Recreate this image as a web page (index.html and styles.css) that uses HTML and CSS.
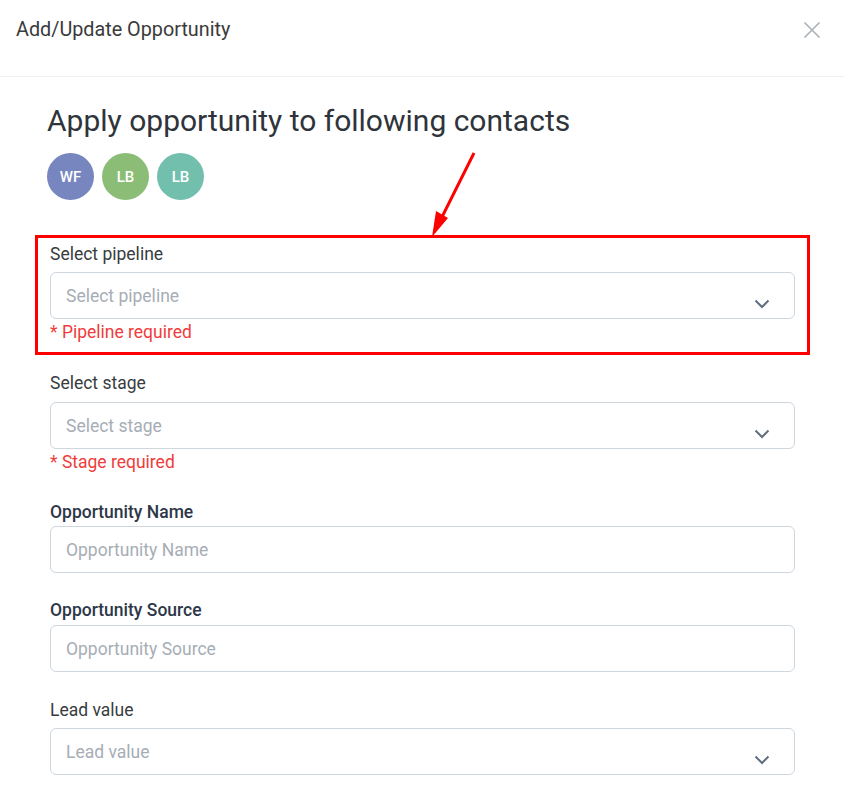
FILE: index.html
```html
<!DOCTYPE html>
<html>
  <head>
    <meta charset="UTF-8" />
    <meta name="viewport" content="width=device-width, initial-scale=1.0" />
    <title>Add/Update Opportunity</title>
    <link rel="stylesheet" href="styles.css">
  </head>
  <body>
    <div class="modal">
      <div class="modal-header">
        <h2 class="modal-title">Add/Update Opportunity</h2>
        <button class="close" aria-label="Close">
          <svg width="18" height="18" viewBox="0 0 18 18"><path d="M1.5 1.5L16.5 16.5M16.5 1.5L1.5 16.5" stroke="#a9b1b9" stroke-width="1.6" fill="none"/></svg>
        </button>
      </div>
      <div class="modal-body">
        <h1 class="heading">Apply opportunity to following contacts</h1>
        <div class="avatars">
          <span class="avatar wf">WF</span>
          <span class="avatar lb1">LB</span>
          <span class="avatar lb2">LB</span>
        </div>
        <svg class="arrow" width="60" height="100" viewBox="0 0 60 100">
          <path d="M52 2L18 70" stroke="#ff0000" stroke-width="3" fill="none"/>
          <path d="M10 86L14 60L26 67Z" fill="#ff0000"/>
        </svg>

        <div class="field highlight">
          <label class="label">Select pipeline</label>
          <div class="input select">
            <span class="placeholder">Select pipeline</span>
            <svg class="chevron" width="16" height="10" viewBox="0 0 16 10"><path d="M1.5 1.5L8 8L14.5 1.5" stroke="#5f6f7e" stroke-width="2" fill="none"/></svg>
          </div>
          <div class="error">* Pipeline required</div>
        </div>

        <div class="field stage">
          <label class="label">Select stage</label>
          <div class="input select">
            <span class="placeholder">Select stage</span>
            <svg class="chevron" width="16" height="10" viewBox="0 0 16 10"><path d="M1.5 1.5L8 8L14.5 1.5" stroke="#5f6f7e" stroke-width="2" fill="none"/></svg>
          </div>
          <div class="error">* Stage required</div>
        </div>

        <div class="field name">
          <label class="label strong">Opportunity Name</label>
          <div class="input"><span class="placeholder">Opportunity Name</span></div>
        </div>

        <div class="field source">
          <label class="label strong">Opportunity Source</label>
          <div class="input"><span class="placeholder">Opportunity Source</span></div>
        </div>

        <div class="field lead">
          <label class="label">Lead value</label>
          <div class="input select">
            <span class="placeholder">Lead value</span>
            <svg class="chevron" width="16" height="10" viewBox="0 0 16 10"><path d="M1.5 1.5L8 8L14.5 1.5" stroke="#5f6f7e" stroke-width="2" fill="none"/></svg>
          </div>
        </div>
      </div>
    </div>
  </body>
</html>
```

FILE: styles.css
```css
body {
  margin: 0;
  font-family: Roboto, "Liberation Sans", sans-serif;
  background: #fff;
  color: #333;
}
.modal-header {
  display: flex;
  align-items: flex-start;
  justify-content: space-between;
  height: 58px;
  padding: 18px 23px 0 16px;
  border-bottom: 1px solid #edf2f7;
}
.modal-title {
  margin: 0;
  font-size: 19.8px;
  line-height: 24px;
  font-weight: 400;
  color: #3a3a3a;
}
.close {
  border: 0;
  background: none;
  padding: 0;
  margin-top: 3px;
  width: 18px;
  height: 18px;
  cursor: pointer;
}
.modal-body {
  position: relative;
  padding: 26px 49px 0 50px;
}
.heading {
  margin: 0 0 0 -3px;
  font-size: 30px;
  line-height: 36px;
  font-weight: 400;
  color: #2f343a;
}
.avatars {
  display: flex;
  gap: 8px;
  margin: 14px 0 0 -3px;
}
.avatar {
  display: flex;
  align-items: center;
  justify-content: center;
  width: 47px;
  height: 47px;
  border-radius: 50%;
  color: #fff;
  font-size: 15px;
  font-weight: 500;
}
.wf { background: #7886bf; }
.lb1 { background: #8bbd76; }
.lb2 { background: #73bfae; }
.arrow {
  position: absolute;
  left: 422px;
  top: 74px;
}
.field {
  display: flex;
  flex-direction: column;
}
.label {
  font-size: 17.5px;
  line-height: 20px;
  color: #383c40;
}
.label.strong {
  font-weight: 500;
  color: #2d3748;
}
.input {
  display: flex;
  align-items: center;
  justify-content: space-between;
  box-sizing: border-box;
  height: 47px;
  padding: 0 24px 0 15px;
  border: 1px solid #cfd6de;
  border-radius: 6px;
}
.placeholder {
  font-size: 17.5px;
  color: #a6adb5;
}
.chevron {
  margin-top: 16px;
}
.error {
  font-size: 17.5px;
  line-height: 20px;
  color: #f03c3c;
  margin-top: 3px;
}
.highlight {
  margin: 35px -15px 0;
  padding: 6px 12px 10px;
  border: 3px solid #ff0000;
}
.highlight .label {
  margin-bottom: 8px;
}
.stage .label {
  margin-bottom: 9px;
}
.stage {
  margin-top: 18px;
}
.name {
  margin-top: 30px;
}
.name .label {
  margin-bottom: 4px;
}
.source .label {
  margin-bottom: 5px;
}
.source {
  margin-top: 27px;
}
.lead {
  margin-top: 28px;
}
.lead .label {
  margin-bottom: 8px;
}
```
